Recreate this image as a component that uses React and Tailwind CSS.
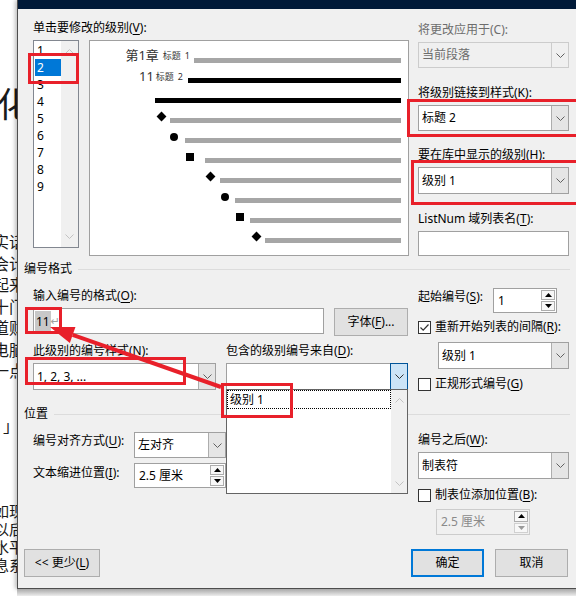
import React from "react";

const U = ({ children }) => <span className="underline underline-offset-[2px]">{children}</span>;

function Chev({ color = "#606060" }) {
  return (
    <svg width="9" height="5" viewBox="0 0 9 5">
      <path d="M0.5 0.5L4.5 4.5L8.5 0.5" fill="none" stroke={color} strokeWidth="1" />
    </svg>
  );
}
function ChevUp({ color = "#606060" }) {
  return (
    <svg width="9" height="5" viewBox="0 0 9 5">
      <path d="M0.5 4.5L4.5 0.5L8.5 4.5" fill="none" stroke={color} strokeWidth="1" />
    </svg>
  );
}

function Label({ className = "", children }) {
  return <div className={`leading-[16px] whitespace-nowrap ${className}`}>{children}</div>;
}

function Select({ className = "", children, disabled = false, open = false }) {
  const box = disabled
    ? "border-[#cccccc] bg-[#f0f0f0] text-[#6d6d6d]"
    : "border-[#a0a0a0] bg-white text-black";
  const btn = open
    ? "bg-[#cce4f7] border border-[#005499] -my-px -mr-px w-[18px]"
    : disabled
    ? "border-l border-[#cccccc] w-[17px]"
    : "bg-[#e5e5e5] border-l border-[#adadad] w-[17px]";
  return (
    <div className={`flex border ${box} ${className}`}>
      <div className="flex-1 flex items-center pl-[3px] whitespace-nowrap overflow-hidden">{children}</div>
      <div className={`shrink-0 flex items-center justify-center ${btn}`}>
        <Chev color={open ? "#333333" : "#606060"} />
      </div>
    </div>
  );
}

function Spin({ className = "", children, disabled = false }) {
  return (
    <div
      className={`flex border ${
        disabled ? "border-[#cccccc] bg-[#f0f0f0] text-[#8a8a8a]" : "border-[#a0a0a0] bg-white text-black"
      } ${className}`}
    >
      <div className="flex-1 flex items-center pl-[4px] whitespace-nowrap overflow-hidden">{children}</div>
      <div className="w-[16px] shrink-0 flex flex-col gap-px p-px">
        <div className="flex-1 flex items-center justify-center border border-[#adadad] bg-[#f7f7f7]">
          <svg width="7" height="4" viewBox="0 0 7 4">
            <path d="M0 4L3.5 0L7 4Z" fill="#000" />
          </svg>
        </div>
        <div
          className={`flex-1 flex items-center justify-center border ${
            disabled ? "border-[#d0d0d0]" : "border-[#adadad]"
          } bg-[#f7f7f7]`}
        >
          <svg width="7" height="4" viewBox="0 0 7 4">
            <path d="M0 0L3.5 4L7 0Z" fill={disabled ? "#9a9a9a" : "#000"} />
          </svg>
        </div>
      </div>
    </div>
  );
}

function Check({ checked = false }) {
  return (
    <div className="w-[13px] h-[13px] shrink-0 border border-[#333333] bg-white flex items-center justify-center">
      {checked && (
        <svg width="11" height="11" viewBox="0 0 11 11">
          <path d="M1.5 5.5L4.2 8.2L9.5 2.5" stroke="#333" fill="none" strokeWidth="1.2" />
        </svg>
      )}
    </div>
  );
}

function Btn({ className = "", children, def = false }) {
  return (
    <div
      className={`flex items-center justify-center bg-[#e1e1e1] whitespace-nowrap ${
        def ? "border-2 border-[#0078d7]" : "border border-[#adadad]"
      } ${className}`}
    >
      {children}
    </div>
  );
}

function GroupHeader({ className = "", title }) {
  return (
    <div className={`flex items-center h-[16px] ${className}`}>
      <span className="ml-[6px] leading-[16px]">{title}</span>
      <div className="flex-1 h-px bg-[#dcdcdc] ml-[6px] mr-[6px]" />
    </div>
  );
}

function Bar({ black }) {
  return <div className={`flex-1 h-[5px] ${black ? "bg-black" : "bg-[#a6a6a6]"}`} />;
}
const Diamond = () => <div className="w-[7px] h-[7px] bg-black rotate-45" />;
const Dot = () => <div className="w-[8px] h-[8px] bg-black rounded-full" />;
const Sq = () => <div className="w-[8px] h-[8px] bg-black" />;

function Row({ lead, children, black = false, shift = "mb-[7px]" }) {
  return (
    <div className="h-[20px] shrink-0 flex items-center">
      <div className={`shrink-0 flex justify-end items-center ${shift} ${lead}`}>{children}</div>
      <Bar black={black} />
    </div>
  );
}

function Preview() {
  return (
    <div className="w-[320px] h-[216px] border border-[#a0a0a0] bg-white pt-[9px] pr-[7px] flex flex-col text-[#333]">
      <Row lead="w-[104px] pr-[4px]" shift="mb-[9px]">
        <span className="text-[13px] leading-none">第1章</span>
        <span className="ml-[4px] text-[9px] leading-none">
          标题<span className="ml-[4px]">1</span>
        </span>
      </Row>
      <Row lead="w-[98px] pr-[5px]" black shift="mb-[8px]">
        <span className="text-[13px] leading-none">11</span>
        <span className="ml-[2px] text-[9px] leading-none">
          标题<span className="ml-[4px]">2</span>
        </span>
      </Row>
      <Row lead="w-[65px]" black />
      <Row lead="w-[80px] pr-[5px]">
        <Diamond />
      </Row>
      <Row lead="w-[95px] pr-[7px]">
        <Dot />
      </Row>
      <Row lead="w-[115px] pr-[11px]">
        <Sq />
      </Row>
      <Row lead="w-[130px] pr-[6px]">
        <Diamond />
      </Row>
      <Row lead="w-[145px] pr-[6px]">
        <Dot />
      </Row>
      <Row lead="w-[160px] pr-[6px]">
        <Sq />
      </Row>
      <Row lead="w-[175px] pr-[5px]">
        <Diamond />
      </Row>
    </div>
  );
}

function LevelList() {
  const items = [1, 2, 3, 4, 5, 6, 7, 8, 9];
  return (
    <div className="w-[46px] h-[208px] border border-[#828790] bg-white flex">
      <div className="w-[27px] pt-px pl-px">
        {items.map((n) => (
          <div
            key={n}
            className={`h-[17px] leading-[17px] pl-[2px] ${n === 2 ? "bg-[#0078d7] text-white" : "text-black"}`}
          >
            {n}
          </div>
        ))}
      </div>
      <div className="flex-1 bg-[#f0f0f0] flex flex-col justify-between items-center pt-[8px] pb-[8px]">
        <ChevUp color="#c2c2c2" />
        <Chev color="#c2c2c2" />
      </div>
    </div>
  );
}

function DocStrip() {
  const top = ["实话", "会计", "起来", "十门", "道财", "电脑", "一点"];
  const bottom = ["如现", "以后", "水平", "息系"];
  return (
    <div className="w-[17px] shrink-0 h-[596px] overflow-hidden bg-white text-[#1a1a1a] font-['Noto_Sans_CJK_SC',sans-serif]">
      <div className="mt-[86px] text-[34px] leading-[34px] ml-[-3px] whitespace-nowrap">化</div>
      <div className="mt-[111px] text-[16px] leading-[21.5px] ml-[-7px] whitespace-nowrap">
        {top.map((t) => (
          <div key={t}>{t}</div>
        ))}
      </div>
      <div className="mt-[35px] text-[16px] leading-[16px] ml-[3px]">」</div>
      <div className="mt-[69px] text-[15px] leading-[18px] ml-[-6px] whitespace-nowrap">
        {bottom.map((t) => (
          <div key={t}>{t}</div>
        ))}
      </div>
    </div>
  );
}

function Dialog() {
  return (
    <div className="flex-1 flex flex-col min-w-0">
      <div className="h-[589px] shrink-0 border-l border-b border-[#4d4d4d] bg-[#f0f0f0] flex flex-col shadow-[-2px_0_4px_rgba(0,0,0,0.25)]">
        <div className="h-[9px] bg-[#001a38] shrink-0" />
        <div className="flex-1 flex flex-col">
          {/* Section A */}
          <div className="flex items-start">
            <div className="ml-[15px] w-[376px] mt-[11px] shrink-0">
              <Label>
                单击要修改的级别(<U>V</U>):
              </Label>
              <div className="mt-[4px] flex items-start">
                <LevelList />
                <div className="ml-[10px]">
                  <Preview />
                </div>
              </div>
            </div>
            <div className="ml-[9px] w-[151px] mt-[13px] shrink-0">
              <Label className="text-[#6d6d6d]">将更改应用于(C):</Label>
              <Select className="mt-[4px] h-[26px]" disabled>
                当前段落
              </Select>
              <Label className="mt-[17px]">
                将级别链接到样式(<U>K</U>):
              </Label>
              <Select className="mt-[4px] h-[26px]">标题 2</Select>
              <Label className="mt-[16px]">
                要在库中显示的级别(<U>H</U>):
              </Label>
              <Select className="mt-[4px] h-[27px]">级别 1</Select>
              <Label className="mt-[17px]">
                ListNum 域列表名(<U>T</U>):
              </Label>
              <div className="mt-[4px] h-[25px] border border-[#a0a0a0] bg-white" />
            </div>
          </div>

          <GroupHeader className="mt-[5px]" title="编号格式" />

          {/* Section B */}
          <div className="flex items-start">
            <div className="ml-[15px] w-[376px] shrink-0">
              <Label className="mt-[11px]">
                输入编号的格式(<U>O</U>):
              </Label>
              <div className="mt-[4px] flex items-start">
                <div className="w-[291px] h-[26px] border border-[#a0a0a0] bg-white flex items-center pl-px">
                  <span className="bg-[#c8c8c8] h-[21px] leading-[21px] px-px">11</span>
                  <span className="text-[#a0a0a0] text-[11px] leading-none font-['DejaVu_Sans',sans-serif]">↵</span>
                </div>
                <Btn className="ml-[10px] w-[74px] h-[28px]">
                  字体(<U>F</U>)...
                </Btn>
              </div>
              <div className="mt-[7px] flex">
                <Label className="w-[193px]">
                  此级别的编号样式(<U>N</U>):
                </Label>
                <Label>
                  包含的级别编号来自(<U>D</U>):
                </Label>
              </div>
              <div className="mt-[4px] flex">
                <Select className="w-[183px] h-[27px]">1, 2, 3, ...</Select>
                <Select className="ml-[10px] w-[182px] h-[27px]" open />
              </div>
            </div>
            <div className="ml-[9px] w-[151px] shrink-0">
              <div className="mt-[11px] flex items-start">
                <Label className="w-[75px] pt-px">
                  起始编号(<U>S</U>):
                </Label>
                <Spin className="w-[64px] h-[25px]">1</Spin>
              </div>
              <div className="mt-[6px] flex items-center h-[16px]">
                <Check checked />
                <span className="ml-[4px] whitespace-nowrap">
                  重新开始列表的间隔(<U>R</U>):
                </span>
              </div>
              <Select className="mt-[7px] ml-[20px] w-[131px] h-[27px]">级别 1</Select>
              <div className="mt-[7px] flex items-center h-[16px]">
                <Check />
                <span className="ml-[4px] whitespace-nowrap">
                  正规形式编号(<U>G</U>)
                </span>
              </div>
            </div>
          </div>

          <GroupHeader className="mt-[14px]" title="位置" />

          {/* Section C */}
          <div className="flex items-start">
            <div className="ml-[15px] w-[376px] shrink-0">
              <div className="mt-[10px] flex items-start">
                <Label className="w-[101px] pt-px">
                  编号对齐方式(<U>U</U>):
                </Label>
                <Select className="w-[92px] h-[26px]">左对齐</Select>
              </div>
              <div className="mt-[5px] flex items-start">
                <Label className="w-[101px] pt-[2px]">
                  文本缩进位置(<U>I</U>):
                </Label>
                <Spin className="w-[92px] h-[25px]">2.5 厘米</Spin>
              </div>
            </div>
            <div className="ml-[9px] w-[151px] shrink-0">
              <Label className="mt-[10px]">
                编号之后(<U>W</U>):
              </Label>
              <Select className="mt-[4px] h-[27px]">制表符</Select>
              <div className="mt-[8px] flex items-center h-[16px]">
                <Check />
                <span className="ml-[4px] whitespace-nowrap">
                  制表位添加位置(<U>B</U>):
                </span>
              </div>
              <Spin className="mt-[6px] ml-[18px] w-[94px] h-[26px]" disabled>
                2.5 厘米
              </Spin>
            </div>
          </div>

          <div className="mt-[14px] flex">
            <Btn className="ml-[6px] w-[76px] h-[28px]">
              &lt;&lt; 更少(<U>L</U>)
            </Btn>
            <Btn def className="ml-[311px] w-[73px] h-[28px]">
              确定
            </Btn>
            <Btn className="ml-[11px] w-[73px] h-[28px]">取消</Btn>
          </div>
        </div>
      </div>
      <div className="flex-1 bg-gradient-to-b from-[#a8a8a8] to-[#ededed]" />
    </div>
  );
}

function Annotations() {
  const tip = [50, 327];
  const tail = [221, 387];
  const dx = tip[0] - tail[0];
  const dy = tip[1] - tail[1];
  const len = Math.hypot(dx, dy);
  const ux = dx / len;
  const uy = dy / len;
  const hl = 24;
  const hw = 8.5;
  const bx = tip[0] - hl * ux;
  const by = tip[1] - hl * uy;
  const nx = -uy;
  const ny = ux;
  const w1 = [bx + hw * nx, by + hw * ny];
  const w2 = [bx - hw * nx, by - hw * ny];
  return (
    <>
      {/* open dropdown list */}
      <div className="absolute left-[226px] top-[389px] w-[182px] h-[105px] bg-white border border-[#646464] flex">
        <div className="flex-1">
          <div className="h-[19px] border border-dotted border-black flex items-center pl-[2px] leading-[16px]">
            级别 1
          </div>
        </div>
        <div className="w-[16px] bg-[#f0f0f0] flex flex-col items-center justify-between pt-[8px] pb-[7px]">
          <ChevUp color="#c2c2c2" />
          <Chev color="#c2c2c2" />
        </div>
      </div>

      {/* red boxes */}
      <div className="absolute left-[28px] top-[53px] w-[51px] h-[31px] border-[3px] border-[#e8202a]" />
      <div className="absolute left-[407px] top-[99px] w-[175px] h-[38px] border-[3px] border-[#e8202a]" />
      <div className="absolute left-[411px] top-[160px] w-[170px] h-[45px] border-[3px] border-[#e8202a]" />
      <div className="absolute left-[25px] top-[307px] w-[37px] h-[27px] border-[3px] border-[#e8202a]" />
      <div className="absolute left-[25px] top-[357px] w-[161px] h-[28px] border-[3px] border-[#e8202a]" />
      <div className="absolute left-[221px] top-[383px] w-[72px] h-[35px] border-[3px] border-[#e8202a]" />

      {/* red arrow */}
      <svg className="absolute left-0 top-0 pointer-events-none" width="576" height="596" viewBox="0 0 576 596">
        <line x1={tail[0]} y1={tail[1]} x2={bx} y2={by} stroke="#e8202a" strokeWidth="4" />
        <polygon points={`${tip[0]},${tip[1]} ${w1[0]},${w1[1]} ${w2[0]},${w2[1]}`} fill="#e8202a" />
      </svg>
    </>
  );
}

export default function App() {
  return (
    <div className="relative w-[576px] h-[596px] overflow-hidden bg-white flex font-['Noto_Sans','Noto_Sans_CJK_SC',sans-serif] text-[12px] leading-[16px] text-black">
      <DocStrip />
      <Dialog />
      <Annotations />
    </div>
  );
}
